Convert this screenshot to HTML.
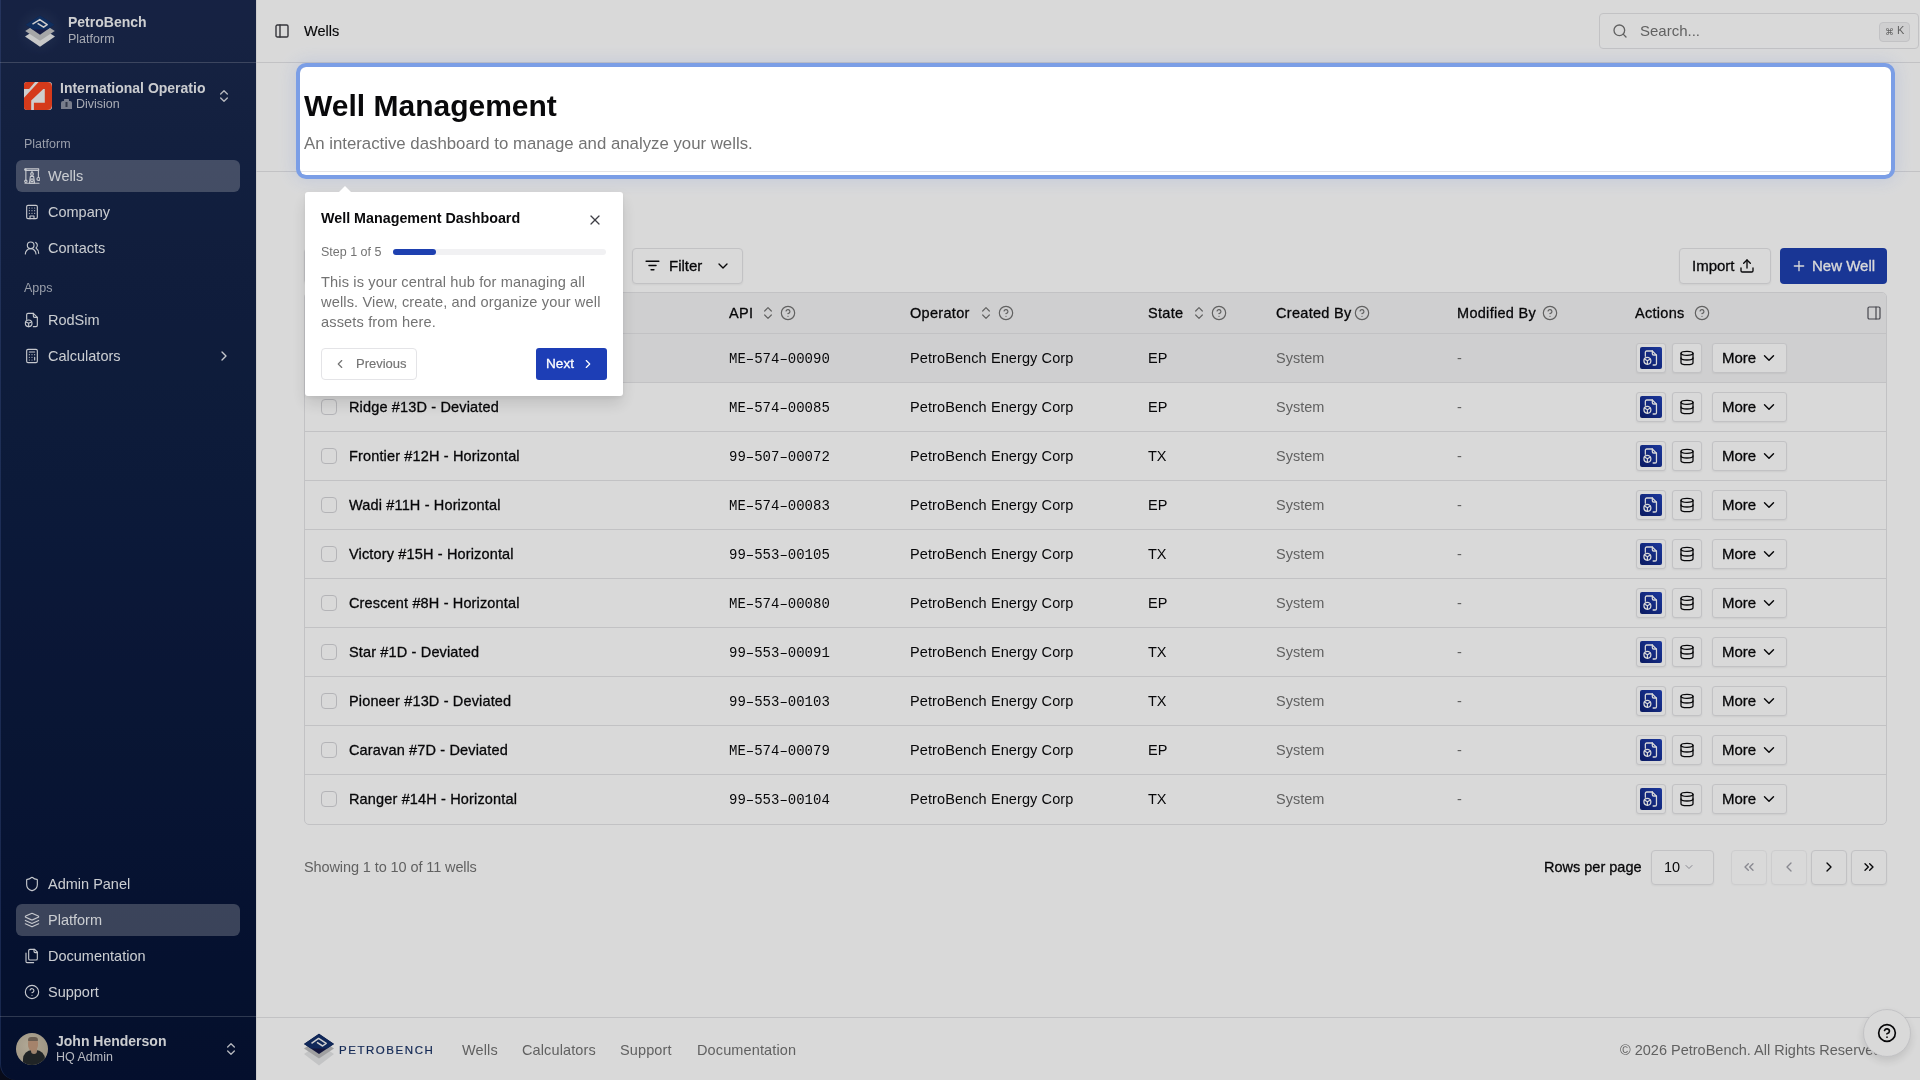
<!DOCTYPE html>
<html><head><meta charset="utf-8"><style>
*{box-sizing:border-box;margin:0;padding:0}
html,body{width:1920px;height:1080px;overflow:hidden}
body{will-change:transform;font-family:"Liberation Sans",sans-serif;background:#fff;color:#09090b;position:relative;font-size:14px}
.abs{position:absolute}
svg{display:block}
.ic{fill:none;stroke:currentColor;stroke-linecap:round;stroke-linejoin:round}
.t{position:absolute;white-space:nowrap}
.m{-webkit-text-stroke:0.3px currentColor}
.sm{-webkit-text-stroke:0.15px currentColor}
.b{font-weight:bold}
.sb{position:absolute;left:0;top:0;width:256px;height:1080px;background:linear-gradient(180deg,#1b294f 0%,#132347 25%,#0f1f44 45%,#051235 100%);color:#f1f5f9}
.sep{position:absolute;left:0;width:256px;height:1px;background:rgba(255,255,255,.2)}
.nav{position:absolute;left:16px;width:224px;height:32px;border-radius:6px}
.nav.act{background:rgba(255,255,255,.25)}
.line{position:absolute;height:1px;background:#e4e4e7}
.btn{position:absolute;border:1px solid #e4e4e7;border-radius:4px;background:#fff;box-shadow:0 1px 2px rgba(0,0,0,.05)}
.th{position:absolute;top:303px;line-height:20px;font-size:14.5px;color:#09090b;white-space:nowrap;-webkit-text-stroke:0.3px currentColor;letter-spacing:0.3px}
.cb{position:absolute;width:16px;height:16px;border:1px solid #d4d4d8;border-radius:4px;background:#fff}
.ab{position:absolute;height:30px;border:1px solid #e4e4e7;border-radius:3px;background:#fff;box-shadow:0 1px 2px rgba(0,0,0,.06)}
.overlay{position:absolute;left:300px;top:67px;width:1591px;height:108px;border-radius:6px;box-shadow:0 0 0 4px #7b9ee6,0 0 18px 6px rgba(80,120,220,.16),0 0 0 3000px rgba(0,0,0,.15)}
</style></head><body>
<div class="sb">
<div class="abs" style="left:0;top:1060px;width:22px;height:20px;background:#0a0e1e"></div><div class="abs" style="left:0;top:0;width:257px;height:1080px;border-left:1px solid rgba(90,120,190,.28);border-bottom-left-radius:16px;background:linear-gradient(180deg,#1b294f 0%,#132347 25%,#0f1f44 45%,#051235 100%)"></div>
<div class="abs" style="left:15px;top:6px;width:50px;height:50px;border-radius:50%;background:radial-gradient(circle,rgba(120,140,190,.16) 0%,rgba(120,140,190,0) 70%)"></div>
<svg class="abs" style="left:20px;top:10px" width="40" height="40" viewBox="0 0 40 40">
<path d="M5 26.5 L20 17 L35 26.5 L20 36.8 Z" fill="#ebecec"/>
<path d="M5.2 21 L20 11.5 L34.8 21 L20 30.8 Z" fill="#c3c4c5"/>
<path d="M5.6 14.8 L20 5.6 L34.4 14.8 L20 24.8 Z" fill="#1a2152"/>
<path d="M5.6 14.8 L20 5.6 L34.4 14.8 L27 19.5 L13 19.5 Z" fill="#12376e"/>
<path d="M12.5 14.2 L19.8 9.6 L27.2 14.6 L23.6 17.2 L17.6 13.4" fill="none" stroke="#f2f2f2" stroke-width="1.5" stroke-linejoin="round"/>
</svg>
<div class="t b" style="left:68px;top:12px;font-size:14px;line-height:20px;color:#f3f4f6">PetroBench</div>
<div class="t " style="left:68px;top:29px;font-size:12.5px;line-height:20px;color:#c5c9d3">Platform</div>
<div class="sep" style="top:62px"></div>
<svg class="abs" style="left:24px;top:82px" width="28" height="28" viewBox="0 0 28 28"><rect width="28" height="28" rx="3" fill="#f2f2f2"/><path d="M3 0H11L5.1 6.9H0V3Q0 0 3 0Z" fill="#fb4520"/><path d="M14.6 0H23Q28 0 28 5V23Q28 28 23 28H9.9V20.8H20.8V6.9H19.3L7.2 18.4V28H3Q0 28 0 25V15.8Z" fill="#fb4520"/></svg>
<div class="t b" style="left:60px;top:78px;font-size:14px;line-height:20px;color:#eef0f4">International Operatio</div>
<svg class="abs" style="left:60px;top:98px" width="13" height="12" viewBox="0 0 13 12"><path d="M1 5 Q1 3 3 3 L4 3 L4 1.5 Q4 1 5 1 L8 1 Q9 1 9 1.5 L9 3 L10 3 Q12 3 12 5 L12 11 L1 11 Z" fill="#8d93a5"/><rect x="5.5" y="4" width="2" height="5" fill="#3b4257"/></svg>
<div class="t " style="left:76px;top:94px;font-size:12.5px;line-height:20px;color:#c6cad4">Division</div>
<svg class="abs ic" style="left:216px;top:88px;color:#d5d8df;stroke-width:2px" width="16" height="16" viewBox="0 0 24 24"><path d="m7 15 5 5 5-5"/><path d="m7 9 5-5 5 5"/></svg>
<div class="t " style="left:24px;top:136px;font-size:12.5px;line-height:16px;color:#b4bac8">Platform</div>
<div class="nav act" style="top:160px"><svg class="abs ic" style="left:8px;top:8px;color:#e9ecf2;stroke-width:1.7px" width="16" height="16" viewBox="0 0 24 24"><path d="M2.5 1.2h19.5v2.4H2.5z"/><circle cx="2" cy="2.4" r="1"/><path d="M2.8 3.6v14.6M21.6 3.6v10.6"/><circle cx="2.8" cy="20" r="1.8"/><circle cx="21.6" cy="16.4" r="2.2"/><path d="M1.5 22.8h21"/><path d="M12 3.6v3.2"/><circle cx="12" cy="9" r="2"/><path d="M9.6 12.5h4.8l1.4 10.3H8.2z"/><circle cx="12" cy="18.4" r="2"/></svg><div class="t" style="left:32px;top:6px;font-size:14.5px;line-height:20px;color:#eef1f6">Wells</div></div>
<div class="nav" style="top:196px"><svg class="abs ic" style="left:8px;top:8px;color:#e9ecf2;stroke-width:1.7px" width="16" height="16" viewBox="0 0 24 24"><rect width="16" height="20" x="4" y="2" rx="2"/><path d="M9 22v-4h6v4"/><path d="M8 6h.01M16 6h.01M12 6h.01M12 10h.01M12 14h.01M16 10h.01M16 14h.01M8 10h.01M8 14h.01"/></svg><div class="t" style="left:32px;top:6px;font-size:14.5px;line-height:20px;color:#eef1f6">Company</div></div>
<div class="nav" style="top:232px"><svg class="abs ic" style="left:8px;top:8px;color:#e9ecf2;stroke-width:1.7px" width="16" height="16" viewBox="0 0 24 24"><path d="M18 21a8 8 0 0 0-16 0"/><circle cx="10" cy="8" r="5"/><path d="M22 20c0-3.37-2-6.5-4-8a5 5 0 0 0-.45-8.3"/></svg><div class="t" style="left:32px;top:6px;font-size:14.5px;line-height:20px;color:#eef1f6">Contacts</div></div>
<div class="t " style="left:24px;top:280px;font-size:12.5px;line-height:16px;color:#b4bac8">Apps</div>
<div class="nav" style="top:304px"><svg class="abs ic" style="left:8px;top:8px;color:#e9ecf2;stroke-width:1.7px" width="16" height="16" viewBox="0 0 24 24"><path d="M14 2v4a2 2 0 0 0 2 2h4"/><path d="M4 11V4a2 2 0 0 1 2-2h8l6 6v12a2 2 0 0 1-2 2h-4"/><circle cx="7" cy="17" r="5"/><path d="M7 17v5M7 17l-4-2M7 17l4-2"/></svg><div class="t" style="left:32px;top:6px;font-size:14.5px;line-height:20px;color:#eef1f6">RodSim</div></div>
<div class="nav" style="top:340px"><svg class="abs ic" style="left:8px;top:8px;color:#e9ecf2;stroke-width:1.7px" width="16" height="16" viewBox="0 0 24 24"><rect width="16" height="20" x="4" y="2" rx="2"/><path d="M8 6h8M16 14v4M16 10h.01M12 10h.01M8 10h.01M12 14h.01M8 14h.01M12 18h.01M8 18h.01"/></svg><div class="t" style="left:32px;top:6px;font-size:14.5px;line-height:20px;color:#eef1f6">Calculators</div><svg class="abs ic" style="left:200px;top:8px;color:#e9ecf2;stroke-width:2px" width="16" height="16" viewBox="0 0 24 24"><path d="m9 18 6-6-6-6"/></svg></div>
<div class="nav" style="top:868px"><svg class="abs ic" style="left:8px;top:8px;color:#e9ecf2;stroke-width:1.7px" width="16" height="16" viewBox="0 0 24 24"><path d="M20 13c0 5-3.5 7.5-7.66 8.95a1 1 0 0 1-.67-.01C7.5 20.5 4 18 4 13V6a1 1 0 0 1 1-1c2 0 4.5-1.2 6.24-2.72a1.17 1.17 0 0 1 1.52 0C14.51 3.81 17 5 19 5a1 1 0 0 1 1 1z"/></svg><div class="t" style="left:32px;top:6px;font-size:14.5px;line-height:20px;color:#eef1f6">Admin Panel</div></div>
<div class="nav act" style="top:904px"><svg class="abs ic" style="left:8px;top:8px;color:#e9ecf2;stroke-width:1.7px" width="16" height="16" viewBox="0 0 24 24"><path d="M12.83 2.18a2 2 0 0 0-1.66 0L2.6 6.08a1 1 0 0 0 0 1.83l8.58 3.91a2 2 0 0 0 1.66 0l8.58-3.9a1 1 0 0 0 0-1.83Z"/><path d="m22 17.65-9.17 4.16a2 2 0 0 1-1.66 0L2 17.65"/><path d="m22 12.65-9.17 4.16a2 2 0 0 1-1.66 0L2 12.65"/></svg><div class="t" style="left:32px;top:6px;font-size:14.5px;line-height:20px;color:#eef1f6">Platform</div></div>
<div class="nav" style="top:940px"><svg class="abs ic" style="left:8px;top:8px;color:#e9ecf2;stroke-width:1.7px" width="16" height="16" viewBox="0 0 24 24"><path d="M20 7h-3a2 2 0 0 1-2-2V2"/><path d="M9 18a2 2 0 0 1-2-2V4a2 2 0 0 1 2-2h7l4 4v10a2 2 0 0 1-2 2Z"/><path d="M3 7.6v12.8A1.6 1.6 0 0 0 4.6 22h9.8"/></svg><div class="t" style="left:32px;top:6px;font-size:14.5px;line-height:20px;color:#eef1f6">Documentation</div></div>
<div class="nav" style="top:976px"><svg class="abs ic" style="left:8px;top:8px;color:#e9ecf2;stroke-width:1.7px" width="16" height="16" viewBox="0 0 24 24"><circle cx="12" cy="12" r="10"/><path d="M9.09 9a3 3 0 0 1 5.83 1c0 2-3 3-3 3"/><path d="M12 17h.01"/></svg><div class="t" style="left:32px;top:6px;font-size:14.5px;line-height:20px;color:#eef1f6">Support</div></div>
<div class="sep" style="top:1016px"></div>
<div class="abs" style="left:16px;top:1033px;width:32px;height:32px;border-radius:50%;background:radial-gradient(circle at 40% 40%,#cfc5b0,#b3a892);overflow:hidden">
<div class="abs" style="left:7px;top:16.5px;width:22px;height:20px;border-radius:9px 9px 0 0;background:#262b2d"></div>
<div class="abs" style="left:14.5px;top:16px;width:6px;height:5px;border-radius:0 0 3px 3px;background:#b99a82"></div>
<div class="abs" style="left:12px;top:4px;width:10px;height:13.5px;border-radius:45%;background:#c29b7e"></div>
<div class="abs" style="left:12px;top:3.5px;width:10px;height:4px;border-radius:5px 5px 1px 1px;background:#7d6e60"></div></div>
<div class="t b" style="left:56px;top:1031px;font-size:14px;line-height:20px;color:#eef0f4">John Henderson</div>
<div class="t " style="left:56px;top:1047px;font-size:12.5px;line-height:20px;color:#d7dae2">HQ Admin</div>
<svg class="abs ic" style="left:223px;top:1041px;color:#d5d8df;stroke-width:2px" width="16" height="16" viewBox="0 0 24 24"><path d="m7 15 5 5 5-5"/><path d="m7 9 5-5 5 5"/></svg>
</div>
<div class="abs" style="left:256px;top:0;width:1px;height:1080px;background:#f0f0f0"></div>
<svg class="abs ic" style="left:274px;top:23px;color:#3f3f46;stroke-width:2.1px" width="16" height="16" viewBox="0 0 24 24"><rect width="18" height="18" x="3" y="3" rx="2"/><path d="M9 3v18"/></svg>
<div class="t sm" style="left:304px;top:21px;font-size:14.5px;line-height:20px;color:#09090b">Wells</div>
<div class="abs" style="left:1599px;top:13px;width:320px;height:36px;border:1px solid #e4e4e7;border-radius:4px;background:#fff"></div>
<svg class="abs ic" style="left:1612px;top:23px;color:#737373;stroke-width:2px" width="16" height="16" viewBox="0 0 24 24"><circle cx="11" cy="11" r="8"/><path d="m21 21-4.3-4.3"/></svg>
<div class="t " style="left:1640px;top:21px;font-size:15px;line-height:20px;color:#737373">Search...</div>
<div class="abs" style="left:1879px;top:22px;width:31px;height:20px;border:1px solid #e4e4e7;border-radius:4px;background:#f4f4f5"></div>
<div class="t " style="left:1885px;top:24px;font-size:9px;line-height:16px;color:#737373">&#8984;</div>
<div class="t " style="left:1897px;top:22px;font-size:11px;line-height:16px;color:#737373">K</div>
<div class="line" style="left:256px;top:62px;width:1664px"></div>
<div class="t b" style="left:304px;top:88px;font-size:30px;line-height:36px;color:#09090b">Well Management</div>
<div class="t " style="left:304px;top:133px;font-size:16.8px;line-height:22px;color:#737373">An interactive dashboard to manage and analyze your wells.</div>
<div class="line" style="left:256px;top:171px;width:1664px"></div>
<div class="btn" style="left:304px;top:248px;width:318px;height:36px"></div>
<div class="btn" style="left:632px;top:248px;width:111px;height:36px"></div>
<svg class="abs ic" style="left:644px;top:257px;color:#09090b;stroke-width:2px" width="17" height="17" viewBox="0 0 24 24"><path d="M3 6h18"/><path d="M7 12h10"/><path d="M10 18h4"/></svg>
<div class="t m" style="left:669px;top:256px;font-size:15px;line-height:20px;color:#09090b">Filter</div>
<svg class="abs ic" style="left:715px;top:258px;color:#09090b;stroke-width:2px" width="16" height="16" viewBox="0 0 24 24"><path d="m6 9 6 6 6-6"/></svg>
<div class="btn" style="left:1679px;top:248px;width:92px;height:36px"></div>
<div class="t m" style="left:1692px;top:256px;font-size:15px;line-height:20px;color:#09090b">Import</div>
<svg class="abs ic" style="left:1739px;top:258px;color:#09090b;stroke-width:2px" width="16" height="16" viewBox="0 0 24 24"><path d="M21 15v4a2 2 0 0 1-2 2H5a2 2 0 0 1-2-2v-4"/><path d="M17 8l-5-5-5 5"/><path d="M12 3v12"/></svg>
<div class="abs" style="left:1780px;top:248px;width:107px;height:36px;border-radius:4px;background:#1e40b0"></div>
<svg class="abs ic" style="left:1791px;top:258px;color:#fff;stroke-width:2px" width="16" height="16" viewBox="0 0 24 24"><path d="M5 12h14"/><path d="M12 5v14"/></svg>
<div class="t m" style="left:1812px;top:256px;font-size:15px;line-height:20px;color:#fff">New Well</div>
<div class="abs" style="left:304px;top:292px;width:1583px;height:533px;border:1px solid #e4e4e7;border-radius:5px;overflow:hidden;background:#fff">
<div class="abs" style="left:0;top:0;width:1581px;height:41px;background:#f4f4f5;border-bottom:1px solid #e4e4e7"></div>
<div class="abs" style="left:0;top:41px;width:1581px;height:48px;background:#f4f4f5"></div></div>
<div class="cb" style="left:321px;top:305px"></div>
<div class="th" style="left:349px">Name</div>
<div class="th" style="left:729px">API</div>
<svg class="abs ic" style="left:760px;top:305px;color:#737373;stroke-width:1.8px" width="16" height="16" viewBox="0 0 24 24"><path d="m7 15 5 5 5-5"/><path d="m7 9 5-5 5 5"/></svg>
<svg class="abs ic" style="left:780px;top:305px;color:#737373;stroke-width:1.8px" width="16" height="16" viewBox="0 0 24 24"><circle cx="12" cy="12" r="10"/><path d="M9.09 9a3 3 0 0 1 5.83 1c0 2-3 3-3 3"/><path d="M12 17h.01"/></svg>
<div class="th" style="left:910px">Operator</div>
<svg class="abs ic" style="left:978px;top:305px;color:#737373;stroke-width:1.8px" width="16" height="16" viewBox="0 0 24 24"><path d="m7 15 5 5 5-5"/><path d="m7 9 5-5 5 5"/></svg>
<svg class="abs ic" style="left:998px;top:305px;color:#737373;stroke-width:1.8px" width="16" height="16" viewBox="0 0 24 24"><circle cx="12" cy="12" r="10"/><path d="M9.09 9a3 3 0 0 1 5.83 1c0 2-3 3-3 3"/><path d="M12 17h.01"/></svg>
<div class="th" style="left:1148px">State</div>
<svg class="abs ic" style="left:1191px;top:305px;color:#737373;stroke-width:1.8px" width="16" height="16" viewBox="0 0 24 24"><path d="m7 15 5 5 5-5"/><path d="m7 9 5-5 5 5"/></svg>
<svg class="abs ic" style="left:1211px;top:305px;color:#737373;stroke-width:1.8px" width="16" height="16" viewBox="0 0 24 24"><circle cx="12" cy="12" r="10"/><path d="M9.09 9a3 3 0 0 1 5.83 1c0 2-3 3-3 3"/><path d="M12 17h.01"/></svg>
<div class="th" style="left:1276px">Created By</div>
<svg class="abs ic" style="left:1354px;top:305px;color:#737373;stroke-width:1.8px" width="16" height="16" viewBox="0 0 24 24"><circle cx="12" cy="12" r="10"/><path d="M9.09 9a3 3 0 0 1 5.83 1c0 2-3 3-3 3"/><path d="M12 17h.01"/></svg>
<div class="th" style="left:1457px">Modified By</div>
<svg class="abs ic" style="left:1542px;top:305px;color:#737373;stroke-width:1.8px" width="16" height="16" viewBox="0 0 24 24"><circle cx="12" cy="12" r="10"/><path d="M9.09 9a3 3 0 0 1 5.83 1c0 2-3 3-3 3"/><path d="M12 17h.01"/></svg>
<div class="th" style="left:1635px">Actions</div>
<svg class="abs ic" style="left:1694px;top:305px;color:#737373;stroke-width:1.8px" width="16" height="16" viewBox="0 0 24 24"><circle cx="12" cy="12" r="10"/><path d="M9.09 9a3 3 0 0 1 5.83 1c0 2-3 3-3 3"/><path d="M12 17h.01"/></svg>
<svg class="abs ic" style="left:1866px;top:305px;color:#52525b;stroke-width:1.8px" width="16" height="16" viewBox="0 0 24 24"><rect width="18" height="18" x="3" y="3" rx="2"/><path d="M15 3v18"/></svg>
<div class="line" style="left:305px;top:382px;width:1581px"></div>
<div class="cb" style="left:321px;top:350px"></div>
<div class="t m" style="left:349px;top:348px;font-size:14.5px;line-height:20px;color:#09090b;letter-spacing:0.15px">Well #?</div>
<div class="t" style="left:729px;top:349px;font-family:'Liberation Mono',monospace;font-size:14px;line-height:20px;color:#09090b">ME&#8211;574&#8211;00090</div>
<div class="t " style="left:910px;top:348px;font-size:14.5px;line-height:20px;color:#09090b;letter-spacing:0.1px">PetroBench Energy Corp</div>
<div class="t " style="left:1148px;top:348px;font-size:14.5px;line-height:20px;color:#09090b">EP</div>
<div class="t " style="left:1276px;top:348px;font-size:14.5px;line-height:20px;color:#737373">System</div>
<div class="t " style="left:1457px;top:348px;font-size:14.5px;line-height:20px;color:#737373">-</div>
<div class="ab" style="left:1636px;top:343px;width:30px"></div>
<div class="abs" style="left:1640px;top:347px;width:22px;height:22px;border-radius:2px;background:linear-gradient(45deg,#0d1f72,#2142b8)"></div>
<svg class="abs ic" style="left:1643px;top:350px;color:#fff;stroke-width:1.9px" width="16" height="16" viewBox="0 0 24 24"><path d="M14 1.5v4a2 2 0 0 0 2 2h4"/><path d="M3.5 9.5V3.5a2 2 0 0 1 2-2h8.5l6.2 6.2V20.5a2 2 0 0 1-2 2h-3"/><circle cx="6.6" cy="16.2" r="5.2"/><path d="M6.6 16.2v5.2M6.6 16.2l-4.5-2.6M6.6 16.2l4.5-2.6"/></svg>
<div class="ab" style="left:1672px;top:343px;width:30px"></div>
<svg class="abs ic" style="left:1679px;top:350px;color:#09090b;stroke-width:1.9px" width="16" height="16" viewBox="0 0 24 24"><ellipse cx="12" cy="5" rx="9" ry="3"/><path d="M3 5V19A9 3 0 0 0 21 19V5"/><path d="M3 12A9 3 0 0 0 21 12"/></svg>
<div class="ab" style="left:1712px;top:343px;width:75px"></div>
<div class="t m" style="left:1722px;top:348px;font-size:15px;line-height:20px;color:#09090b">More</div>
<svg class="abs ic" style="left:1760px;top:349px;color:#09090b;stroke-width:1.9px" width="18" height="18" viewBox="0 0 24 24"><path d="m6 9 6 6 6-6"/></svg>
<div class="line" style="left:305px;top:431px;width:1581px"></div>
<div class="cb" style="left:321px;top:399px"></div>
<div class="t m" style="left:349px;top:397px;font-size:14.5px;line-height:20px;color:#09090b;letter-spacing:0.15px">Ridge #13D - Deviated</div>
<div class="t" style="left:729px;top:398px;font-family:'Liberation Mono',monospace;font-size:14px;line-height:20px;color:#09090b">ME&#8211;574&#8211;00085</div>
<div class="t " style="left:910px;top:397px;font-size:14.5px;line-height:20px;color:#09090b;letter-spacing:0.1px">PetroBench Energy Corp</div>
<div class="t " style="left:1148px;top:397px;font-size:14.5px;line-height:20px;color:#09090b">EP</div>
<div class="t " style="left:1276px;top:397px;font-size:14.5px;line-height:20px;color:#737373">System</div>
<div class="t " style="left:1457px;top:397px;font-size:14.5px;line-height:20px;color:#737373">-</div>
<div class="ab" style="left:1636px;top:392px;width:30px"></div>
<div class="abs" style="left:1640px;top:396px;width:22px;height:22px;border-radius:2px;background:linear-gradient(45deg,#0d1f72,#2142b8)"></div>
<svg class="abs ic" style="left:1643px;top:399px;color:#fff;stroke-width:1.9px" width="16" height="16" viewBox="0 0 24 24"><path d="M14 1.5v4a2 2 0 0 0 2 2h4"/><path d="M3.5 9.5V3.5a2 2 0 0 1 2-2h8.5l6.2 6.2V20.5a2 2 0 0 1-2 2h-3"/><circle cx="6.6" cy="16.2" r="5.2"/><path d="M6.6 16.2v5.2M6.6 16.2l-4.5-2.6M6.6 16.2l4.5-2.6"/></svg>
<div class="ab" style="left:1672px;top:392px;width:30px"></div>
<svg class="abs ic" style="left:1679px;top:399px;color:#09090b;stroke-width:1.9px" width="16" height="16" viewBox="0 0 24 24"><ellipse cx="12" cy="5" rx="9" ry="3"/><path d="M3 5V19A9 3 0 0 0 21 19V5"/><path d="M3 12A9 3 0 0 0 21 12"/></svg>
<div class="ab" style="left:1712px;top:392px;width:75px"></div>
<div class="t m" style="left:1722px;top:397px;font-size:15px;line-height:20px;color:#09090b">More</div>
<svg class="abs ic" style="left:1760px;top:398px;color:#09090b;stroke-width:1.9px" width="18" height="18" viewBox="0 0 24 24"><path d="m6 9 6 6 6-6"/></svg>
<div class="line" style="left:305px;top:480px;width:1581px"></div>
<div class="cb" style="left:321px;top:448px"></div>
<div class="t m" style="left:349px;top:446px;font-size:14.5px;line-height:20px;color:#09090b;letter-spacing:0.15px">Frontier #12H - Horizontal</div>
<div class="t" style="left:729px;top:447px;font-family:'Liberation Mono',monospace;font-size:14px;line-height:20px;color:#09090b">99&#8211;507&#8211;00072</div>
<div class="t " style="left:910px;top:446px;font-size:14.5px;line-height:20px;color:#09090b;letter-spacing:0.1px">PetroBench Energy Corp</div>
<div class="t " style="left:1148px;top:446px;font-size:14.5px;line-height:20px;color:#09090b">TX</div>
<div class="t " style="left:1276px;top:446px;font-size:14.5px;line-height:20px;color:#737373">System</div>
<div class="t " style="left:1457px;top:446px;font-size:14.5px;line-height:20px;color:#737373">-</div>
<div class="ab" style="left:1636px;top:441px;width:30px"></div>
<div class="abs" style="left:1640px;top:445px;width:22px;height:22px;border-radius:2px;background:linear-gradient(45deg,#0d1f72,#2142b8)"></div>
<svg class="abs ic" style="left:1643px;top:448px;color:#fff;stroke-width:1.9px" width="16" height="16" viewBox="0 0 24 24"><path d="M14 1.5v4a2 2 0 0 0 2 2h4"/><path d="M3.5 9.5V3.5a2 2 0 0 1 2-2h8.5l6.2 6.2V20.5a2 2 0 0 1-2 2h-3"/><circle cx="6.6" cy="16.2" r="5.2"/><path d="M6.6 16.2v5.2M6.6 16.2l-4.5-2.6M6.6 16.2l4.5-2.6"/></svg>
<div class="ab" style="left:1672px;top:441px;width:30px"></div>
<svg class="abs ic" style="left:1679px;top:448px;color:#09090b;stroke-width:1.9px" width="16" height="16" viewBox="0 0 24 24"><ellipse cx="12" cy="5" rx="9" ry="3"/><path d="M3 5V19A9 3 0 0 0 21 19V5"/><path d="M3 12A9 3 0 0 0 21 12"/></svg>
<div class="ab" style="left:1712px;top:441px;width:75px"></div>
<div class="t m" style="left:1722px;top:446px;font-size:15px;line-height:20px;color:#09090b">More</div>
<svg class="abs ic" style="left:1760px;top:447px;color:#09090b;stroke-width:1.9px" width="18" height="18" viewBox="0 0 24 24"><path d="m6 9 6 6 6-6"/></svg>
<div class="line" style="left:305px;top:529px;width:1581px"></div>
<div class="cb" style="left:321px;top:497px"></div>
<div class="t m" style="left:349px;top:495px;font-size:14.5px;line-height:20px;color:#09090b;letter-spacing:0.15px">Wadi #11H - Horizontal</div>
<div class="t" style="left:729px;top:496px;font-family:'Liberation Mono',monospace;font-size:14px;line-height:20px;color:#09090b">ME&#8211;574&#8211;00083</div>
<div class="t " style="left:910px;top:495px;font-size:14.5px;line-height:20px;color:#09090b;letter-spacing:0.1px">PetroBench Energy Corp</div>
<div class="t " style="left:1148px;top:495px;font-size:14.5px;line-height:20px;color:#09090b">EP</div>
<div class="t " style="left:1276px;top:495px;font-size:14.5px;line-height:20px;color:#737373">System</div>
<div class="t " style="left:1457px;top:495px;font-size:14.5px;line-height:20px;color:#737373">-</div>
<div class="ab" style="left:1636px;top:490px;width:30px"></div>
<div class="abs" style="left:1640px;top:494px;width:22px;height:22px;border-radius:2px;background:linear-gradient(45deg,#0d1f72,#2142b8)"></div>
<svg class="abs ic" style="left:1643px;top:497px;color:#fff;stroke-width:1.9px" width="16" height="16" viewBox="0 0 24 24"><path d="M14 1.5v4a2 2 0 0 0 2 2h4"/><path d="M3.5 9.5V3.5a2 2 0 0 1 2-2h8.5l6.2 6.2V20.5a2 2 0 0 1-2 2h-3"/><circle cx="6.6" cy="16.2" r="5.2"/><path d="M6.6 16.2v5.2M6.6 16.2l-4.5-2.6M6.6 16.2l4.5-2.6"/></svg>
<div class="ab" style="left:1672px;top:490px;width:30px"></div>
<svg class="abs ic" style="left:1679px;top:497px;color:#09090b;stroke-width:1.9px" width="16" height="16" viewBox="0 0 24 24"><ellipse cx="12" cy="5" rx="9" ry="3"/><path d="M3 5V19A9 3 0 0 0 21 19V5"/><path d="M3 12A9 3 0 0 0 21 12"/></svg>
<div class="ab" style="left:1712px;top:490px;width:75px"></div>
<div class="t m" style="left:1722px;top:495px;font-size:15px;line-height:20px;color:#09090b">More</div>
<svg class="abs ic" style="left:1760px;top:496px;color:#09090b;stroke-width:1.9px" width="18" height="18" viewBox="0 0 24 24"><path d="m6 9 6 6 6-6"/></svg>
<div class="line" style="left:305px;top:578px;width:1581px"></div>
<div class="cb" style="left:321px;top:546px"></div>
<div class="t m" style="left:349px;top:544px;font-size:14.5px;line-height:20px;color:#09090b;letter-spacing:0.15px">Victory #15H - Horizontal</div>
<div class="t" style="left:729px;top:545px;font-family:'Liberation Mono',monospace;font-size:14px;line-height:20px;color:#09090b">99&#8211;553&#8211;00105</div>
<div class="t " style="left:910px;top:544px;font-size:14.5px;line-height:20px;color:#09090b;letter-spacing:0.1px">PetroBench Energy Corp</div>
<div class="t " style="left:1148px;top:544px;font-size:14.5px;line-height:20px;color:#09090b">TX</div>
<div class="t " style="left:1276px;top:544px;font-size:14.5px;line-height:20px;color:#737373">System</div>
<div class="t " style="left:1457px;top:544px;font-size:14.5px;line-height:20px;color:#737373">-</div>
<div class="ab" style="left:1636px;top:539px;width:30px"></div>
<div class="abs" style="left:1640px;top:543px;width:22px;height:22px;border-radius:2px;background:linear-gradient(45deg,#0d1f72,#2142b8)"></div>
<svg class="abs ic" style="left:1643px;top:546px;color:#fff;stroke-width:1.9px" width="16" height="16" viewBox="0 0 24 24"><path d="M14 1.5v4a2 2 0 0 0 2 2h4"/><path d="M3.5 9.5V3.5a2 2 0 0 1 2-2h8.5l6.2 6.2V20.5a2 2 0 0 1-2 2h-3"/><circle cx="6.6" cy="16.2" r="5.2"/><path d="M6.6 16.2v5.2M6.6 16.2l-4.5-2.6M6.6 16.2l4.5-2.6"/></svg>
<div class="ab" style="left:1672px;top:539px;width:30px"></div>
<svg class="abs ic" style="left:1679px;top:546px;color:#09090b;stroke-width:1.9px" width="16" height="16" viewBox="0 0 24 24"><ellipse cx="12" cy="5" rx="9" ry="3"/><path d="M3 5V19A9 3 0 0 0 21 19V5"/><path d="M3 12A9 3 0 0 0 21 12"/></svg>
<div class="ab" style="left:1712px;top:539px;width:75px"></div>
<div class="t m" style="left:1722px;top:544px;font-size:15px;line-height:20px;color:#09090b">More</div>
<svg class="abs ic" style="left:1760px;top:545px;color:#09090b;stroke-width:1.9px" width="18" height="18" viewBox="0 0 24 24"><path d="m6 9 6 6 6-6"/></svg>
<div class="line" style="left:305px;top:627px;width:1581px"></div>
<div class="cb" style="left:321px;top:595px"></div>
<div class="t m" style="left:349px;top:593px;font-size:14.5px;line-height:20px;color:#09090b;letter-spacing:0.15px">Crescent #8H - Horizontal</div>
<div class="t" style="left:729px;top:594px;font-family:'Liberation Mono',monospace;font-size:14px;line-height:20px;color:#09090b">ME&#8211;574&#8211;00080</div>
<div class="t " style="left:910px;top:593px;font-size:14.5px;line-height:20px;color:#09090b;letter-spacing:0.1px">PetroBench Energy Corp</div>
<div class="t " style="left:1148px;top:593px;font-size:14.5px;line-height:20px;color:#09090b">EP</div>
<div class="t " style="left:1276px;top:593px;font-size:14.5px;line-height:20px;color:#737373">System</div>
<div class="t " style="left:1457px;top:593px;font-size:14.5px;line-height:20px;color:#737373">-</div>
<div class="ab" style="left:1636px;top:588px;width:30px"></div>
<div class="abs" style="left:1640px;top:592px;width:22px;height:22px;border-radius:2px;background:linear-gradient(45deg,#0d1f72,#2142b8)"></div>
<svg class="abs ic" style="left:1643px;top:595px;color:#fff;stroke-width:1.9px" width="16" height="16" viewBox="0 0 24 24"><path d="M14 1.5v4a2 2 0 0 0 2 2h4"/><path d="M3.5 9.5V3.5a2 2 0 0 1 2-2h8.5l6.2 6.2V20.5a2 2 0 0 1-2 2h-3"/><circle cx="6.6" cy="16.2" r="5.2"/><path d="M6.6 16.2v5.2M6.6 16.2l-4.5-2.6M6.6 16.2l4.5-2.6"/></svg>
<div class="ab" style="left:1672px;top:588px;width:30px"></div>
<svg class="abs ic" style="left:1679px;top:595px;color:#09090b;stroke-width:1.9px" width="16" height="16" viewBox="0 0 24 24"><ellipse cx="12" cy="5" rx="9" ry="3"/><path d="M3 5V19A9 3 0 0 0 21 19V5"/><path d="M3 12A9 3 0 0 0 21 12"/></svg>
<div class="ab" style="left:1712px;top:588px;width:75px"></div>
<div class="t m" style="left:1722px;top:593px;font-size:15px;line-height:20px;color:#09090b">More</div>
<svg class="abs ic" style="left:1760px;top:594px;color:#09090b;stroke-width:1.9px" width="18" height="18" viewBox="0 0 24 24"><path d="m6 9 6 6 6-6"/></svg>
<div class="line" style="left:305px;top:676px;width:1581px"></div>
<div class="cb" style="left:321px;top:644px"></div>
<div class="t m" style="left:349px;top:642px;font-size:14.5px;line-height:20px;color:#09090b;letter-spacing:0.15px">Star #1D - Deviated</div>
<div class="t" style="left:729px;top:643px;font-family:'Liberation Mono',monospace;font-size:14px;line-height:20px;color:#09090b">99&#8211;553&#8211;00091</div>
<div class="t " style="left:910px;top:642px;font-size:14.5px;line-height:20px;color:#09090b;letter-spacing:0.1px">PetroBench Energy Corp</div>
<div class="t " style="left:1148px;top:642px;font-size:14.5px;line-height:20px;color:#09090b">TX</div>
<div class="t " style="left:1276px;top:642px;font-size:14.5px;line-height:20px;color:#737373">System</div>
<div class="t " style="left:1457px;top:642px;font-size:14.5px;line-height:20px;color:#737373">-</div>
<div class="ab" style="left:1636px;top:637px;width:30px"></div>
<div class="abs" style="left:1640px;top:641px;width:22px;height:22px;border-radius:2px;background:linear-gradient(45deg,#0d1f72,#2142b8)"></div>
<svg class="abs ic" style="left:1643px;top:644px;color:#fff;stroke-width:1.9px" width="16" height="16" viewBox="0 0 24 24"><path d="M14 1.5v4a2 2 0 0 0 2 2h4"/><path d="M3.5 9.5V3.5a2 2 0 0 1 2-2h8.5l6.2 6.2V20.5a2 2 0 0 1-2 2h-3"/><circle cx="6.6" cy="16.2" r="5.2"/><path d="M6.6 16.2v5.2M6.6 16.2l-4.5-2.6M6.6 16.2l4.5-2.6"/></svg>
<div class="ab" style="left:1672px;top:637px;width:30px"></div>
<svg class="abs ic" style="left:1679px;top:644px;color:#09090b;stroke-width:1.9px" width="16" height="16" viewBox="0 0 24 24"><ellipse cx="12" cy="5" rx="9" ry="3"/><path d="M3 5V19A9 3 0 0 0 21 19V5"/><path d="M3 12A9 3 0 0 0 21 12"/></svg>
<div class="ab" style="left:1712px;top:637px;width:75px"></div>
<div class="t m" style="left:1722px;top:642px;font-size:15px;line-height:20px;color:#09090b">More</div>
<svg class="abs ic" style="left:1760px;top:643px;color:#09090b;stroke-width:1.9px" width="18" height="18" viewBox="0 0 24 24"><path d="m6 9 6 6 6-6"/></svg>
<div class="line" style="left:305px;top:725px;width:1581px"></div>
<div class="cb" style="left:321px;top:693px"></div>
<div class="t m" style="left:349px;top:691px;font-size:14.5px;line-height:20px;color:#09090b;letter-spacing:0.15px">Pioneer #13D - Deviated</div>
<div class="t" style="left:729px;top:692px;font-family:'Liberation Mono',monospace;font-size:14px;line-height:20px;color:#09090b">99&#8211;553&#8211;00103</div>
<div class="t " style="left:910px;top:691px;font-size:14.5px;line-height:20px;color:#09090b;letter-spacing:0.1px">PetroBench Energy Corp</div>
<div class="t " style="left:1148px;top:691px;font-size:14.5px;line-height:20px;color:#09090b">TX</div>
<div class="t " style="left:1276px;top:691px;font-size:14.5px;line-height:20px;color:#737373">System</div>
<div class="t " style="left:1457px;top:691px;font-size:14.5px;line-height:20px;color:#737373">-</div>
<div class="ab" style="left:1636px;top:686px;width:30px"></div>
<div class="abs" style="left:1640px;top:690px;width:22px;height:22px;border-radius:2px;background:linear-gradient(45deg,#0d1f72,#2142b8)"></div>
<svg class="abs ic" style="left:1643px;top:693px;color:#fff;stroke-width:1.9px" width="16" height="16" viewBox="0 0 24 24"><path d="M14 1.5v4a2 2 0 0 0 2 2h4"/><path d="M3.5 9.5V3.5a2 2 0 0 1 2-2h8.5l6.2 6.2V20.5a2 2 0 0 1-2 2h-3"/><circle cx="6.6" cy="16.2" r="5.2"/><path d="M6.6 16.2v5.2M6.6 16.2l-4.5-2.6M6.6 16.2l4.5-2.6"/></svg>
<div class="ab" style="left:1672px;top:686px;width:30px"></div>
<svg class="abs ic" style="left:1679px;top:693px;color:#09090b;stroke-width:1.9px" width="16" height="16" viewBox="0 0 24 24"><ellipse cx="12" cy="5" rx="9" ry="3"/><path d="M3 5V19A9 3 0 0 0 21 19V5"/><path d="M3 12A9 3 0 0 0 21 12"/></svg>
<div class="ab" style="left:1712px;top:686px;width:75px"></div>
<div class="t m" style="left:1722px;top:691px;font-size:15px;line-height:20px;color:#09090b">More</div>
<svg class="abs ic" style="left:1760px;top:692px;color:#09090b;stroke-width:1.9px" width="18" height="18" viewBox="0 0 24 24"><path d="m6 9 6 6 6-6"/></svg>
<div class="line" style="left:305px;top:774px;width:1581px"></div>
<div class="cb" style="left:321px;top:742px"></div>
<div class="t m" style="left:349px;top:740px;font-size:14.5px;line-height:20px;color:#09090b;letter-spacing:0.15px">Caravan #7D - Deviated</div>
<div class="t" style="left:729px;top:741px;font-family:'Liberation Mono',monospace;font-size:14px;line-height:20px;color:#09090b">ME&#8211;574&#8211;00079</div>
<div class="t " style="left:910px;top:740px;font-size:14.5px;line-height:20px;color:#09090b;letter-spacing:0.1px">PetroBench Energy Corp</div>
<div class="t " style="left:1148px;top:740px;font-size:14.5px;line-height:20px;color:#09090b">EP</div>
<div class="t " style="left:1276px;top:740px;font-size:14.5px;line-height:20px;color:#737373">System</div>
<div class="t " style="left:1457px;top:740px;font-size:14.5px;line-height:20px;color:#737373">-</div>
<div class="ab" style="left:1636px;top:735px;width:30px"></div>
<div class="abs" style="left:1640px;top:739px;width:22px;height:22px;border-radius:2px;background:linear-gradient(45deg,#0d1f72,#2142b8)"></div>
<svg class="abs ic" style="left:1643px;top:742px;color:#fff;stroke-width:1.9px" width="16" height="16" viewBox="0 0 24 24"><path d="M14 1.5v4a2 2 0 0 0 2 2h4"/><path d="M3.5 9.5V3.5a2 2 0 0 1 2-2h8.5l6.2 6.2V20.5a2 2 0 0 1-2 2h-3"/><circle cx="6.6" cy="16.2" r="5.2"/><path d="M6.6 16.2v5.2M6.6 16.2l-4.5-2.6M6.6 16.2l4.5-2.6"/></svg>
<div class="ab" style="left:1672px;top:735px;width:30px"></div>
<svg class="abs ic" style="left:1679px;top:742px;color:#09090b;stroke-width:1.9px" width="16" height="16" viewBox="0 0 24 24"><ellipse cx="12" cy="5" rx="9" ry="3"/><path d="M3 5V19A9 3 0 0 0 21 19V5"/><path d="M3 12A9 3 0 0 0 21 12"/></svg>
<div class="ab" style="left:1712px;top:735px;width:75px"></div>
<div class="t m" style="left:1722px;top:740px;font-size:15px;line-height:20px;color:#09090b">More</div>
<svg class="abs ic" style="left:1760px;top:741px;color:#09090b;stroke-width:1.9px" width="18" height="18" viewBox="0 0 24 24"><path d="m6 9 6 6 6-6"/></svg>
<div class="cb" style="left:321px;top:791px"></div>
<div class="t m" style="left:349px;top:789px;font-size:14.5px;line-height:20px;color:#09090b;letter-spacing:0.15px">Ranger #14H - Horizontal</div>
<div class="t" style="left:729px;top:790px;font-family:'Liberation Mono',monospace;font-size:14px;line-height:20px;color:#09090b">99&#8211;553&#8211;00104</div>
<div class="t " style="left:910px;top:789px;font-size:14.5px;line-height:20px;color:#09090b;letter-spacing:0.1px">PetroBench Energy Corp</div>
<div class="t " style="left:1148px;top:789px;font-size:14.5px;line-height:20px;color:#09090b">TX</div>
<div class="t " style="left:1276px;top:789px;font-size:14.5px;line-height:20px;color:#737373">System</div>
<div class="t " style="left:1457px;top:789px;font-size:14.5px;line-height:20px;color:#737373">-</div>
<div class="ab" style="left:1636px;top:784px;width:30px"></div>
<div class="abs" style="left:1640px;top:788px;width:22px;height:22px;border-radius:2px;background:linear-gradient(45deg,#0d1f72,#2142b8)"></div>
<svg class="abs ic" style="left:1643px;top:791px;color:#fff;stroke-width:1.9px" width="16" height="16" viewBox="0 0 24 24"><path d="M14 1.5v4a2 2 0 0 0 2 2h4"/><path d="M3.5 9.5V3.5a2 2 0 0 1 2-2h8.5l6.2 6.2V20.5a2 2 0 0 1-2 2h-3"/><circle cx="6.6" cy="16.2" r="5.2"/><path d="M6.6 16.2v5.2M6.6 16.2l-4.5-2.6M6.6 16.2l4.5-2.6"/></svg>
<div class="ab" style="left:1672px;top:784px;width:30px"></div>
<svg class="abs ic" style="left:1679px;top:791px;color:#09090b;stroke-width:1.9px" width="16" height="16" viewBox="0 0 24 24"><ellipse cx="12" cy="5" rx="9" ry="3"/><path d="M3 5V19A9 3 0 0 0 21 19V5"/><path d="M3 12A9 3 0 0 0 21 12"/></svg>
<div class="ab" style="left:1712px;top:784px;width:75px"></div>
<div class="t m" style="left:1722px;top:789px;font-size:15px;line-height:20px;color:#09090b">More</div>
<svg class="abs ic" style="left:1760px;top:790px;color:#09090b;stroke-width:1.9px" width="18" height="18" viewBox="0 0 24 24"><path d="m6 9 6 6 6-6"/></svg>
<div class="t " style="left:304px;top:857px;font-size:14.5px;line-height:20px;color:#737373;letter-spacing:-0.1px">Showing 1 to 10 of 11 wells</div>
<div class="t m" style="left:1544px;top:857px;font-size:14.5px;line-height:20px;color:#09090b">Rows per page</div>
<div class="btn" style="left:1651px;top:850px;width:63px;height:35px"></div>
<div class="t " style="left:1664px;top:857px;font-size:14.5px;line-height:20px;color:#09090b">10</div>
<svg class="abs ic" style="left:1683px;top:861px;color:#a1a1aa;stroke-width:2px" width="12" height="12" viewBox="0 0 24 24"><path d="m6 9 6 6 6-6"/></svg>
<div class="btn" style="left:1731px;top:850px;width:36px;height:35px;opacity:0.5"></div>
<div class="btn" style="left:1771px;top:850px;width:36px;height:35px;opacity:0.5"></div>
<div class="btn" style="left:1811px;top:850px;width:36px;height:35px;opacity:1"></div>
<div class="btn" style="left:1851px;top:850px;width:36px;height:35px;opacity:1"></div>
<svg class="abs ic" style="left:1741px;top:859px;color:#a1a1aa;stroke-width:2px" width="16" height="16" viewBox="0 0 24 24"><path d="m11 17-5-5 5-5"/><path d="m18 17-5-5 5-5"/></svg>
<svg class="abs ic" style="left:1781px;top:859px;color:#a1a1aa;stroke-width:2px" width="16" height="16" viewBox="0 0 24 24"><path d="m15 18-6-6 6-6"/></svg>
<svg class="abs ic" style="left:1821px;top:859px;color:#09090b;stroke-width:2px" width="16" height="16" viewBox="0 0 24 24"><path d="m9 18 6-6-6-6"/></svg>
<svg class="abs ic" style="left:1861px;top:859px;color:#09090b;stroke-width:2px" width="16" height="16" viewBox="0 0 24 24"><path d="m6 17 5-5-5-5"/><path d="m13 17 5-5-5-5"/></svg>
<div class="line" style="left:256px;top:1017px;width:1664px"></div>
<svg class="abs" style="left:300px;top:1030px" width="40" height="40" viewBox="0 0 40 40">
<path d="M4 24 L19 14 L34 24 L19 35.5 Z" fill="#e6e7e8"/>
<path d="M4 18.5 L19 8.5 L34 18.5 L19 28.5 Z" fill="#bcbdbe"/>
<path d="M4 14 L19 3.8 L34 14 L19 24 Z" fill="#161b48"/>
<path d="M4 14 L19 3.8 L34 14 L27 18.5 L11 18.5 Z" fill="#13306a"/>
<path d="M11.5 13.3 L18.6 8.4 L26.2 13.3 L22.6 16 L17 12.4" fill="none" stroke="#f4f4f4" stroke-width="1.5" stroke-linejoin="round"/>
</svg>
<div class="t " style="left:339px;top:1040px;font-size:11.5px;line-height:20px;color:#1a3366;letter-spacing:1.55px;-webkit-text-stroke:0.2px currentColor">PETROBENCH</div>
<div class="t " style="left:462px;top:1040px;font-size:14.5px;line-height:20px;color:#737373;letter-spacing:0.12px">Wells</div>
<div class="t " style="left:522px;top:1040px;font-size:14.5px;line-height:20px;color:#737373;letter-spacing:0.12px">Calculators</div>
<div class="t " style="left:620px;top:1040px;font-size:14.5px;line-height:20px;color:#737373;letter-spacing:0.12px">Support</div>
<div class="t " style="left:697px;top:1040px;font-size:14.5px;line-height:20px;color:#737373;letter-spacing:0.12px">Documentation</div>
<div class="t " style="left:1620px;top:1040px;font-size:14.5px;line-height:20px;color:#737373">&copy; 2026 PetroBench. All Rights Reserved.</div>
<div class="abs" style="left:1863px;top:1009px;width:48px;height:48px;border-radius:50%;background:#fff;border:1px solid #e4e4e7;box-shadow:0 4px 10px rgba(0,0,0,.12)"></div>
<svg class="abs ic" style="left:1877px;top:1023px;color:#09090b;stroke-width:2px" width="20" height="20" viewBox="0 0 24 24"><circle cx="12" cy="12" r="10"/><path d="M9.09 9a3 3 0 0 1 5.83 1c0 2-3 3-3 3"/><path d="M12 17h.01"/></svg>
<div class="overlay"></div>
<div class="abs" style="left:305px;top:192px;width:318px;height:204px;background:#fff;border-radius:3px;box-shadow:0 8px 16px rgba(0,0,0,.12),0 2px 4px rgba(0,0,0,.06)"></div>
<svg class="abs" style="left:338px;top:185px" width="14" height="8" viewBox="0 0 14 8"><path d="M0 8 L7 1 L14 8 Z" fill="#fff"/></svg>
<div class="t b" style="left:321px;top:208px;font-size:14.3px;line-height:20px;color:#09090b">Well Management Dashboard</div>
<svg class="abs ic" style="left:587px;top:212px;color:#3f3f46;stroke-width:1.8px" width="16" height="16" viewBox="0 0 24 24"><path d="M18 6 6 18"/><path d="m6 6 12 12"/></svg>
<div class="t " style="left:321px;top:242px;font-size:12.5px;line-height:20px;color:#737373">Step 1 of 5</div>
<div class="abs" style="left:393px;top:249px;width:213px;height:6px;border-radius:3px;background:#f1f1f3"></div>
<div class="abs" style="left:393px;top:249px;width:43px;height:6px;border-radius:3px;background:#1e40b0"></div>
<div class="abs" style="left:321px;top:272px;width:295px;font-size:14.6px;line-height:20px;letter-spacing:0.13px;color:#737373">This is your central hub for managing all wells. View, create, and organize your well assets from here.</div>
<div class="abs" style="left:321px;top:348px;width:96px;height:32px;border:1px solid #e4e4e7;border-radius:4px;background:#fff"></div>
<svg class="abs ic" style="left:333px;top:357px;color:#737373;stroke-width:2px" width="14" height="14" viewBox="0 0 24 24"><path d="m15 18-6-6 6-6"/></svg>
<div class="t sm" style="left:356px;top:354px;font-size:13px;line-height:20px;color:#737373">Previous</div>
<div class="abs" style="left:536px;top:348px;width:71px;height:32px;border-radius:3px;background:#1d3eb6"></div>
<div class="t m" style="left:546px;top:354px;font-size:13.6px;line-height:20px;color:#fff">Next</div>
<svg class="abs ic" style="left:581px;top:357px;color:#fff;stroke-width:2px" width="14" height="14" viewBox="0 0 24 24"><path d="m9 18 6-6-6-6"/></svg>
</body></html>
